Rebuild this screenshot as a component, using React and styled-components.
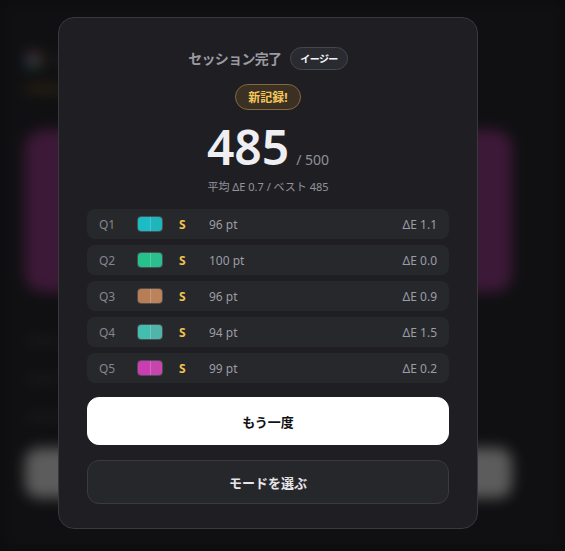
import React from "react";
import styled, { createGlobalStyle } from "styled-components";

const GlobalStyle = createGlobalStyle`
  html, body {
    margin: 0;
    padding: 0;
    background: #1c1c20;
    font-family: "Noto Sans", "Noto Sans CJK JP", sans-serif;
    overflow: hidden;
  }
`;

const rounds = [
  { q: "Q1", a: "#1abdc5", b: "#1eb6bc", rank: "S", pt: 96, de: "1.1" },
  { q: "Q2", a: "#24c18a", b: "#2bbf8f", rank: "S", pt: 100, de: "0.0" },
  { q: "Q3", a: "#b97d55", b: "#bc825b", rank: "S", pt: 96, de: "0.9" },
  { q: "Q4", a: "#44bdb1", b: "#4fb5ab", rank: "S", pt: 94, de: "1.5" },
  { q: "Q5", a: "#c93fb1", b: "#c845ae", rank: "S", pt: 99, de: "0.2" },
];

/* ---------- page behind the dialog ---------- */

const Page = styled.div`
  width: 565px;
  height: 551px;
  box-sizing: border-box;
  padding: 50px 53px 0 25px;
  display: flex;
  flex-direction: column;
  filter: blur(7px);
  background: #26262b;
`;

const Brand = styled.div`
  display: flex;
  align-items: center;
  gap: 10px;
  height: 20px;
`;

const Logo = styled.div`
  width: 16px;
  height: 16px;
  border-radius: 50%;
  background: conic-gradient(#e05b9a, #f0c050, #3ac0b0, #5a7ae0, #e05b9a);
`;

const BrandText = styled.div`
  width: 60px;
  height: 8px;
  border-radius: 4px;
  background: #4a4a50;
`;

const Hint = styled.div`
  width: 40px;
  height: 6px;
  border-radius: 3px;
  margin-top: 16px;
  background: #7a6430;
`;

const Hero = styled.div`
  margin-top: 38px;
  height: 162px;
  border-radius: 18px;
  background: #923c86;
`;

const Line = styled.div`
  margin-top: ${(p) => p.$gap}px;
  width: 40px;
  height: 6px;
  border-radius: 3px;
  background: #444449;
`;

const BigButton = styled.div`
  margin-top: 28px;
  height: 50px;
  border-radius: 14px;
  background: #dcdcdc;
`;

const Dim = styled.div`
  position: fixed;
  inset: 0;
  background: rgba(0, 0, 0, 0.58);
`;

/* ---------- dialog ---------- */

const Dialog = styled.div`
  position: fixed;
  top: 17px;
  left: 58px;
  width: 420px;
  box-sizing: border-box;
  padding: 29px 28px 24px;
  background: #1f1f23;
  border: 1px solid #38383d;
  border-radius: 16px;
  display: flex;
  flex-direction: column;
  align-items: center;
`;

const TitleRow = styled.div`
  display: flex;
  align-items: center;
  gap: 9px;
  height: 22px;
`;

const Title = styled.h2`
  margin: 0;
  font-size: 14px;
  font-weight: 700;
  color: #9a9aa2;
  letter-spacing: -0.7px;
`;

const Pill = styled.span`
  display: inline-flex;
  align-items: center;
  justify-content: center;
  box-sizing: border-box;
  height: ${(p) => p.$h}px;
  padding: 0 ${(p) => p.$px}px;
  border-radius: 999px;
  font-size: ${(p) => p.$size}px;
  font-weight: 700;
  letter-spacing: ${(p) => p.$ls || 0}px;
  color: ${(p) => p.$color};
  background: ${(p) => p.$bg};
  border: 1px solid ${(p) => p.$border};
`;

const ScoreRow = styled.div`
  margin-top: 10px;
  display: flex;
  align-items: baseline;
  gap: 7px;
  height: 54px;
`;

const Score = styled.span`
  font-size: 48px;
  font-weight: 600;
  line-height: 54px;
  color: #efeff3;
`;

const Max = styled.span`
  font-size: 14px;
  color: #909098;
`;

const Sub = styled.div`
  margin-top: 5px;
  font-size: 11px;
  line-height: 16px;
  color: #94949c;
`;

const List = styled.div`
  margin-top: 14px;
  width: 100%;
  display: flex;
  flex-direction: column;
  gap: 6px;
`;

const Row = styled.div`
  display: flex;
  align-items: center;
  height: 30px;
  padding: 0 12px;
  border-radius: 8px;
  background: #27282c;
  font-size: 12px;
  color: #9c9ca4;
`;

const QLabel = styled.span`
  width: 38px;
  color: #85858d;
`;

const Swatch = styled.div`
  display: flex;
  width: 26px;
  height: 16px;
  border-radius: 4px;
  overflow: hidden;
  box-sizing: border-box;
  border: 1px solid rgba(255, 255, 255, 0.18);
`;

const Half = styled.div`
  flex: 1;
  background: ${(p) => p.$c};
  & + & {
    border-left: 1px solid rgba(255, 255, 255, 0.2);
  }
`;

const Rank = styled.span`
  margin-left: 16px;
  width: 30px;
  font-weight: 700;
  color: #f2c14e;
`;

const Points = styled.span`
  flex: 1;
`;

const Delta = styled.span`
  color: #9c9ca4;
`;

const Button = styled.button`
  width: 100%;
  height: ${(p) => p.$h}px;
  margin-top: ${(p) => p.$mt}px;
  border-radius: 12px;
  font-family: inherit;
  font-size: 13px;
  font-weight: 700;
  cursor: pointer;
  color: ${(p) => (p.$primary ? "#111114" : "#e6e6ea")};
  background: ${(p) => (p.$primary ? "#ffffff" : "#26272b")};
  border: 1px solid ${(p) => (p.$primary ? "#ffffff" : "#3a3a40")};
`;

export default function App() {
  return (
    <>
      <GlobalStyle />
      <Page>
        <Brand>
          <Logo />
          <BrandText />
        </Brand>
        <Hint />
        <Hero />
        <Line $gap={46} />
        <Line $gap={32} />
        <Line $gap={32} />
        <BigButton />
      </Page>
      <Dim />
      <Dialog>
        <TitleRow>
          <Title>セッション完了</Title>
          <Pill $h={23} $px={9} $size={10} $ls={-0.6} $color="#f4f4f6" $bg="#2a2b30" $border="#45464c">
            イージー
          </Pill>
        </TitleRow>
        <Pill
          style={{ marginTop: 15 }}
          $h={26}
          $px={12}
          $size={12}
          $color="#f4c65a"
          $bg="#3a3124"
          $border="#85693a"
        >
          新記録!
        </Pill>
        <ScoreRow>
          <Score>485</Score>
          <Max>/ 500</Max>
        </ScoreRow>
        <Sub>平均 ΔE 0.7 / ベスト 485</Sub>
        <List>
          {rounds.map((r) => (
            <Row key={r.q}>
              <QLabel>{r.q}</QLabel>
              <Swatch>
                <Half $c={r.a} />
                <Half $c={r.b} />
              </Swatch>
              <Rank>{r.rank}</Rank>
              <Points>{r.pt} pt</Points>
              <Delta>ΔE {r.de}</Delta>
            </Row>
          ))}
        </List>
        <Button $primary $h={48} $mt={14}>
          もう一度
        </Button>
        <Button $h={44} $mt={15}>
          モードを選ぶ
        </Button>
      </Dialog>
    </>
  );
}
